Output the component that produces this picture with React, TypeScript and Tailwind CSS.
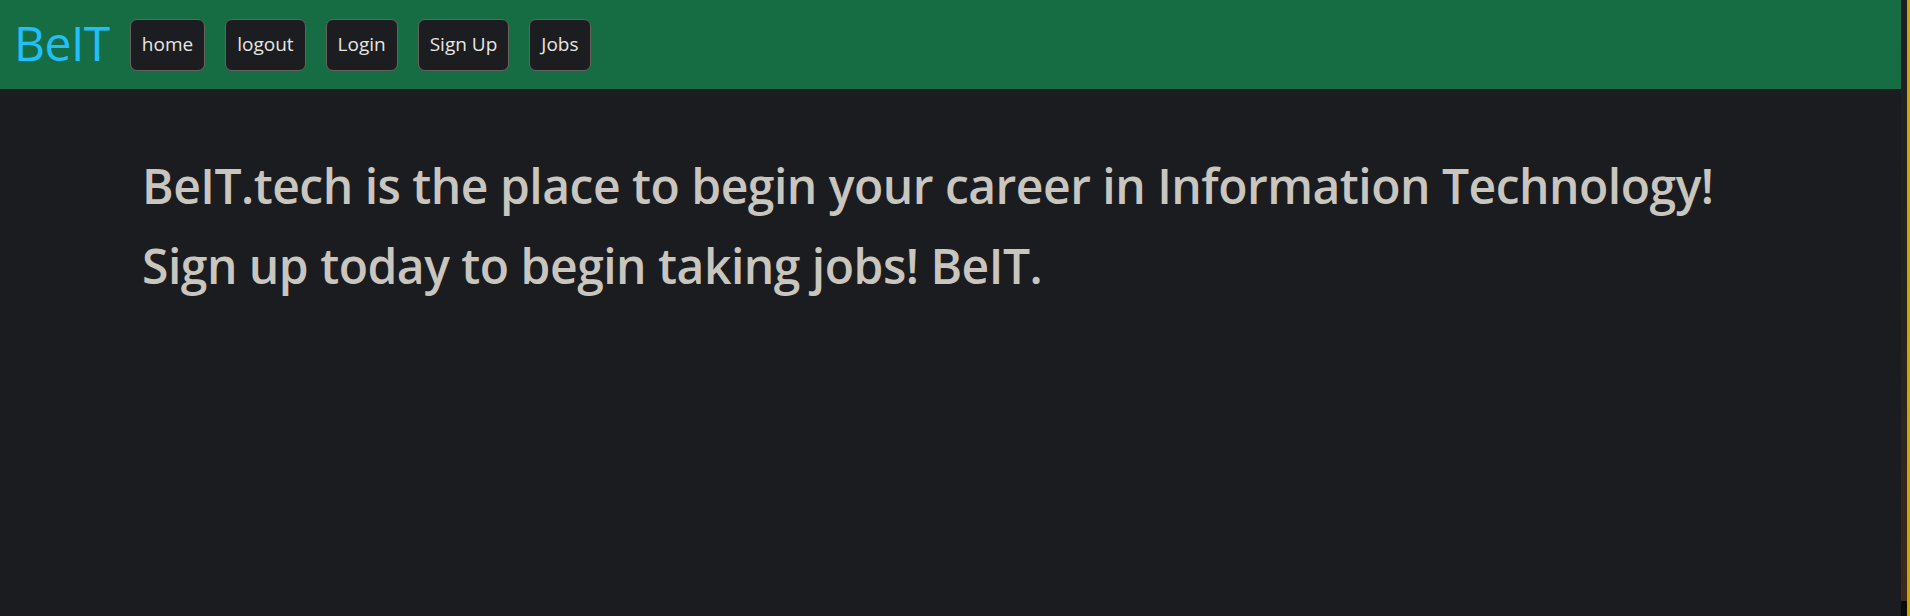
import React from 'react';

const links = ['home', 'logout', 'Login', 'Sign Up', 'Jobs'];

export default function App() {
  return (
    <div className="flex h-[616px] w-[1910px] overflow-hidden bg-[#1b1c1f] font-['Open_Sans',sans-serif]">
      <div className="flex w-[1901px] flex-col">
        {/* Navbar */}
        <nav className="flex h-[89px] items-center bg-[#176d43] pl-[14px]">
          <span className="mr-[20px] -mt-[3px] text-[48px] font-medium leading-none tracking-[-0.5px] text-[#1fc0fb]">BeIT</span>
          <div className="flex gap-[20px]">
            {links.map((l) => (
              <button
                key={l}
                className="h-[52px] rounded-[7px] border border-[#66615b] bg-[#1c1d20] px-[11px] text-[19px] text-[#e8e6e3]"
              >
                {l}
              </button>
            ))}
          </div>
        </nav>

        {/* Hero */}
        <main className="pl-[142px] pt-[57px] text-[48px] font-semibold leading-[80px] tracking-[-0.5px] text-[#c9c5bf]">
          <p>BeIT.tech is the place to begin your career in Information Technology!</p>
          <p>Sign up today to begin taking jobs! BeIT.</p>
        </main>
      </div>
      <div className="flex w-[6px] flex-col">
        <div className="h-[601px] bg-gradient-to-b from-[#1c1f23] via-[#23221f] to-[#3d2a1c]" />
        <div className="flex-1 bg-[#0b0b0b]" />
      </div>
      <div className="w-[3px] bg-[#c9a900]" />
    </div>
  );
}
